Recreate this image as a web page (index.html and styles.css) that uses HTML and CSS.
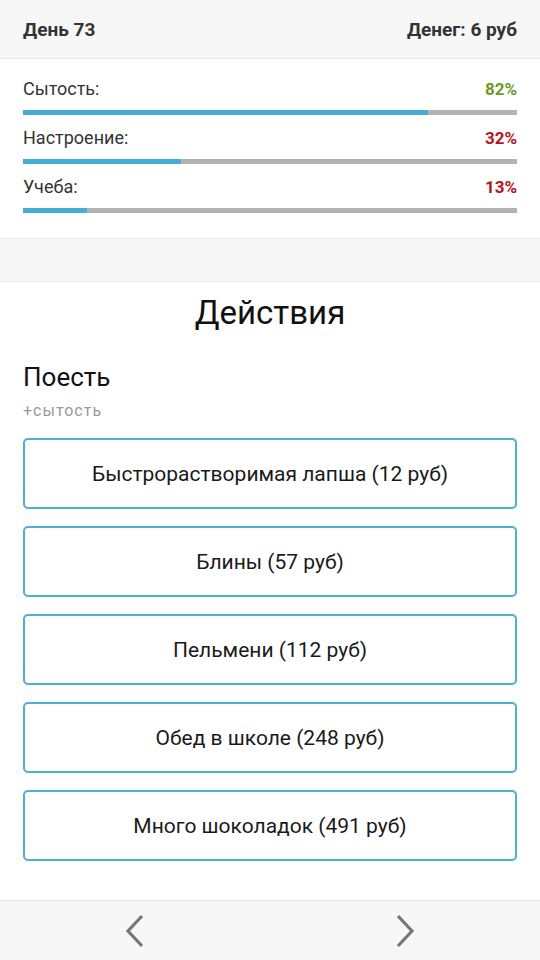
FILE: index.html
```html
<!DOCTYPE html>
<html lang="ru">
<head>
  <meta charset="UTF-8">
  <meta name="viewport" content="width=device-width, initial-scale=1.0">
  <title>День 73</title>
  <link rel="stylesheet" href="styles.css">
</head>
<body>
  <div class="app">
    <header class="topbar">
      <span>День 73</span>
      <span>Денег: 6 руб</span>
    </header>

    <!-- Stats -->
    <section class="stats">
      <div class="stat">
        <div class="stat-row">
          <span>Сытость:</span>
          <span class="value good">82%</span>
        </div>
        <div class="bar"><div class="fill" style="width: 82%"></div></div>
      </div>
      <div class="stat">
        <div class="stat-row">
          <span>Настроение:</span>
          <span class="value bad">32%</span>
        </div>
        <div class="bar"><div class="fill" style="width: 32%"></div></div>
      </div>
      <div class="stat">
        <div class="stat-row">
          <span>Учеба:</span>
          <span class="value bad">13%</span>
        </div>
        <div class="bar"><div class="fill" style="width: 13%"></div></div>
      </div>
    </section>

    <div class="spacer"></div>

    <!-- Actions -->
    <main class="actions">
      <h1>Действия</h1>
      <h2>Поесть</h2>
      <p class="hint">+сытость</p>
      <div class="buttons">
        <button>Быстрорастворимая лапша (12 руб)</button>
        <button>Блины (57 руб)</button>
        <button>Пельмени (112 руб)</button>
        <button>Обед в школе (248 руб)</button>
        <button>Много шоколадок (491 руб)</button>
      </div>
    </main>

    <footer class="nav">
      <svg width="22" height="34" viewBox="0 0 22 34"><path d="M18 2 L4 17 L18 32" fill="none" stroke="#777" stroke-width="3.2"/></svg>
      <svg width="22" height="34" viewBox="0 0 22 34"><path d="M4 2 L18 17 L4 32" fill="none" stroke="#777" stroke-width="3.2"/></svg>
    </footer>
  </div>
</body>
</html>
```

FILE: styles.css
```css
body {
  margin: 0;
  padding: 0;
  font-family: Roboto, "Liberation Sans", sans-serif;
  color: #222;
  background: #fff;
}

.app {
  height: 960px;
  display: flex;
  flex-direction: column;
}

.topbar {
  height: 58px;
  padding: 0 23px;
  display: flex;
  justify-content: space-between;
  align-items: center;
  background: #f7f7f7;
  border-bottom: 1px solid #e6e6e6;
  font-size: 19px;
  font-weight: bold;
  color: #333;
}

.stats {
  padding: 18px 23px 25px;
  display: flex;
  flex-direction: column;
  gap: 11px;
}

.stat-row {
  display: flex;
  justify-content: space-between;
  font-size: 18px;
  color: #333;
  line-height: 24px;
}

.value {
  font-weight: bold;
  font-size: 17px;
}

.value.good {
  color: #6b9a26;
}

.value.bad {
  color: #b0171e;
}

.bar {
  margin-top: 9px;
  height: 5px;
  background: #b3b3b3;
}

.fill {
  height: 100%;
  background: #45acd5;
}

.spacer {
  height: 42px;
  background: #f7f7f7;
  border-top: 1px solid #ebebeb;
  border-bottom: 1px solid #ebebeb;
}

.actions {
  flex: 1;
  padding: 0 23px;
}

.actions h1 {
  margin: 11px 0 0;
  text-align: center;
  font-size: 33px;
  font-weight: normal;
  line-height: 40px;
  color: #111;
}

.actions h2 {
  margin: 28px 0 0;
  font-size: 26px;
  font-weight: normal;
  line-height: 32px;
  color: #111;
}

.hint {
  margin: 8px 0 0;
  font-size: 16px;
  letter-spacing: 1px;
  color: #9a9a9a;
  line-height: 20px;
}

.buttons {
  margin-top: 17px;
  display: flex;
  flex-direction: column;
  gap: 17px;
}

.buttons button {
  height: 71px;
  background: #fff;
  border: 2px solid #4cb0cf;
  border-radius: 5px;
  font-family: inherit;
  font-size: 21px;
  color: #1a1a1a;
  cursor: pointer;
}

.nav {
  height: 59px;
  display: flex;
  justify-content: space-around;
  align-items: center;
  background: #f7f7f7;
  border-top: 1px solid #e6e6e6;
}
```
